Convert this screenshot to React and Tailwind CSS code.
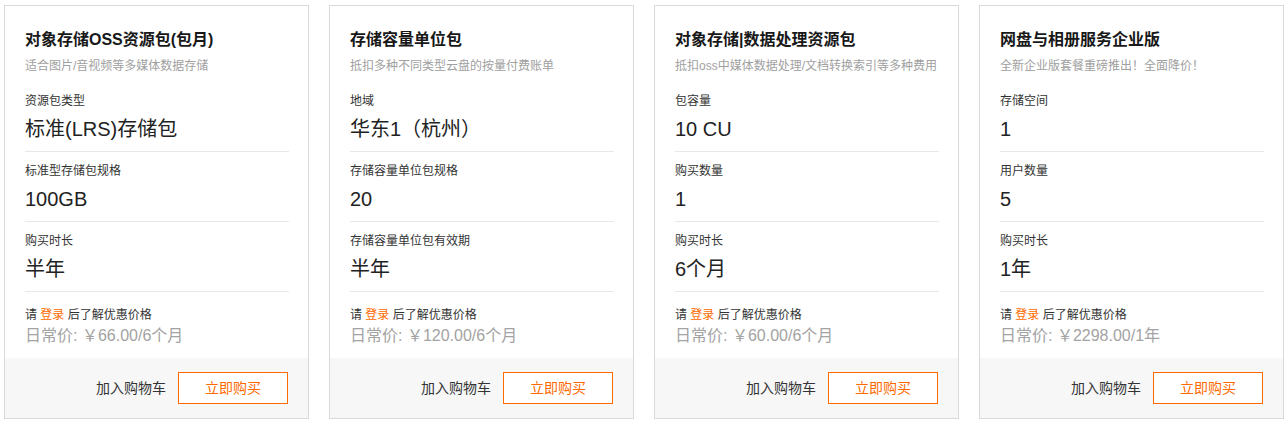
import React from "react";

const cards = [
  {
    title: "对象存储OSS资源包(包月)",
    sub: "适合图片/音视频等多媒体数据存储",
    rows: [
      ["资源包类型", "标准(LRS)存储包"],
      ["标准型存储包规格", "100GB"],
      ["购买时长", "半年"],
    ],
    price: "日常价: ￥66.00/6个月",
  },
  {
    title: "存储容量单位包",
    sub: "抵扣多种不同类型云盘的按量付费账单",
    rows: [
      ["地域", "华东1（杭州）"],
      ["存储容量单位包规格", "20"],
      ["存储容量单位包有效期", "半年"],
    ],
    price: "日常价: ￥120.00/6个月",
  },
  {
    title: "对象存储|数据处理资源包",
    sub: "抵扣oss中媒体数据处理/文档转换索引等多种费用",
    rows: [
      ["包容量", "10 CU"],
      ["购买数量", "1"],
      ["购买时长", "6个月"],
    ],
    price: "日常价: ￥60.00/6个月",
  },
  {
    title: "网盘与相册服务企业版",
    sub: "全新企业版套餐重磅推出！全面降价！",
    rows: [
      ["存储空间", "1"],
      ["用户数量", "5"],
      ["购买时长", "1年"],
    ],
    price: "日常价: ￥2298.00/1年",
  },
];

function Card({ c }) {
  return (
    <div className="w-[305px] h-[414px] shrink-0 border border-[#dadada] bg-white flex flex-col">
      <div className="pl-[20px] pr-[19px] pt-[22px]">
        <div className="text-[16px] leading-[24px] font-bold text-[#181818] whitespace-nowrap">{c.title}</div>
        <div className="mt-[5px] text-[12px] leading-[18px] text-[#a0a0a0] whitespace-nowrap">{c.sub}</div>
        <div className="mt-[7px]">
          {c.rows.map(([l, v], i) => (
            <div key={i} className="pt-[10px] pb-[8px] border-b border-[#e8e8e8]">
              <div className="text-[12px] leading-[18px] text-[#333333]">{l}</div>
              <div className="mt-[5px] text-[20px] leading-[28px] text-[#222222] whitespace-nowrap">{v}</div>
            </div>
          ))}
        </div>
        <div className="pt-[14px] text-[12px] leading-[18px] text-[#333333]">
          请 <span className="text-[#ff6a00]">登录</span> 后了解优惠价格
        </div>
        <div className="mt-[1px] text-[16px] leading-[22px] text-[#a3a3a3] whitespace-nowrap">{c.price}</div>
      </div>
      <div className="mt-auto h-[60px] bg-[#f7f7f7] flex items-center justify-end pr-[20px] gap-[12px]">
        <span className="text-[14px] text-[#333333]">加入购物车</span>
        <button className="w-[110px] h-[32px] border border-[#ff6a00] bg-white text-[14px] text-[#ff6a00]">立即购买</button>
      </div>
    </div>
  );
}

export default function App() {
  return (
    <div
      className="w-[1287px] h-[423px] bg-white pl-[4px] pt-[5px] flex gap-[20px]"
      style={{ fontFamily: '"Liberation Sans", "Noto Sans CJK SC", sans-serif' }}
    >
      {cards.map((c, i) => (
        <Card key={i} c={c} />
      ))}
    </div>
  );
}
